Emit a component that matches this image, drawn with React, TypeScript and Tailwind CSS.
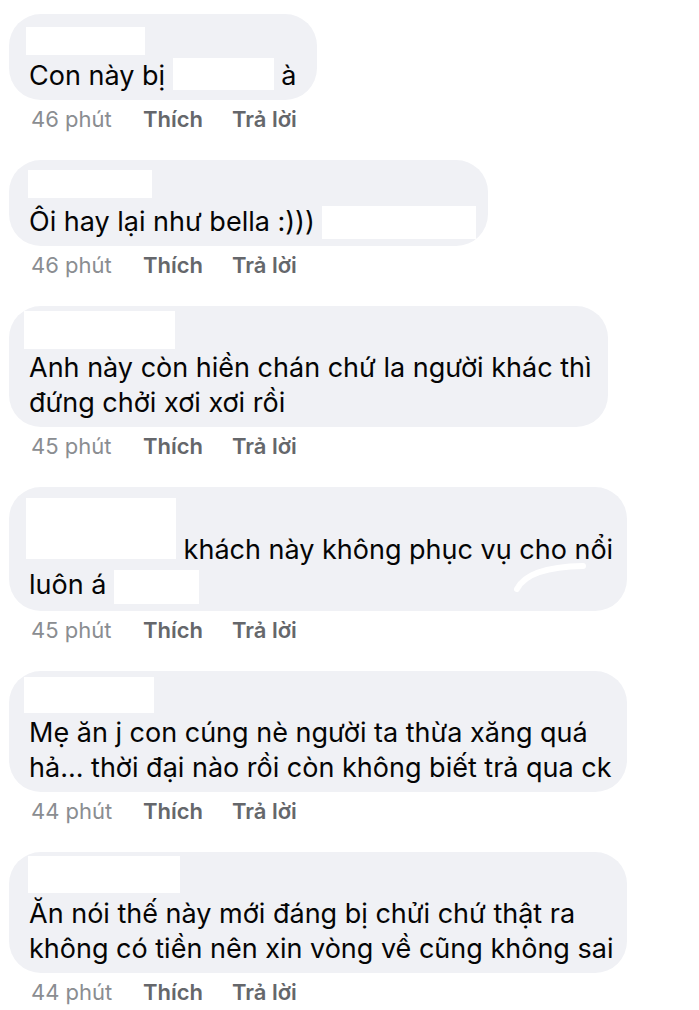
import type { ReactNode } from 'react'

interface Comment {
  time: string
  width: string
  name?: string
  body: ReactNode
  extra?: ReactNode
}

const Hidden = ({ className }: { className: string }) => (
  <span className={`inline-block bg-white ${className}`} />
)

const comments: Comment[] = [
  {
    time: '46 phút',
    width: 'w-[308px]',
    name: 'ml-[-3px] mt-[13px] mb-[3px] h-[28px] w-[119px]',
    body: (
      <>
        Con này bị <Hidden className="h-[32px] w-[101px] align-[-5px]" /> à
      </>
    ),
  },
  {
    time: '46 phút',
    width: 'w-[479px]',
    name: 'ml-[-1px] mt-[10px] mb-[6px] h-[28px] w-[124px]',
    body: (
      <>
        Ôi hay lại như bella :))) <Hidden className="h-[33px] w-[154px] align-[-8px]" />
      </>
    ),
  },
  {
    time: '45 phút',
    width: 'w-[599px]',
    name: 'ml-[-5px] mt-[5px] mb-[1px] h-[38px] w-[151px]',
    body: (
      <>
        Anh này còn hiền chán chứ la người khác thì
        <br />
        đứng chởi xơi xơi rồi
      </>
    ),
  },
  {
    time: '45 phút',
    width: 'w-[618px]',
    body: (
      <>
        <Hidden className="ml-[-3px] h-[61px] w-[150px]" /> khách này không phục vụ cho nổi
        <br />
        luôn á <Hidden className="h-[34px] w-[85px] align-[-10px]" />
      </>
    ),
    extra: (
      <svg className="absolute left-[500px] top-[70px]" width="85" height="40" viewBox="0 0 85 40" fill="none">
        <path d="M8 32 Q19 10 74 9" stroke="white" strokeWidth="6" strokeLinecap="round" />
      </svg>
    ),
  },
  {
    time: '44 phút',
    width: 'w-[618px]',
    name: 'ml-[-5px] mt-[6px] mb-[2px] h-[36px] w-[130px]',
    body: (
      <>
        Mẹ ăn j con cúng nè người ta thừa xăng quá
        <br />
        hả... thời đại nào rồi còn không biết trả qua ck
      </>
    ),
  },
  {
    time: '44 phút',
    width: 'w-[618px]',
    name: 'ml-[-1px] mt-[4px] mb-[3px] h-[37px] w-[152px]',
    body: (
      <>
        Ăn nói thế này mới đáng bị chửi chứ thật ra
        <br />
        không có tiền nên xin vòng về cũng không sai
      </>
    ),
  },
]

function CommentItem({ c }: { c: Comment }) {
  return (
    <div className="mb-[22px]">
      <div
        className={`relative flow-root rounded-[32px] bg-[#f0f1f5] pl-[20px] pb-[7px] text-[27px] leading-[35px] text-[#050505] ${c.width} ${c.name ? '' : 'pt-[11px]'}`}
      >
        {c.name && <div className={`bg-white ${c.name}`} />}
        <p>{c.body}</p>
        {c.extra}
      </div>
      <div className="flex h-[38px] items-center pl-[22px] text-[22px]">
        <span className="w-[112px] text-[#8a8d91]">{c.time}</span>
        <span className="w-[89px] font-semibold text-[#65676b]">Thích</span>
        <span className="font-semibold text-[#65676b]">Trả lời</span>
      </div>
    </div>
  )
}

export default function App() {
  return (
    <div className="min-h-screen bg-white pl-[9px] pt-[14px] font-['Inter',sans-serif]">
      {comments.map((c, i) => (
        <CommentItem key={i} c={c} />
      ))}
    </div>
  )
}
